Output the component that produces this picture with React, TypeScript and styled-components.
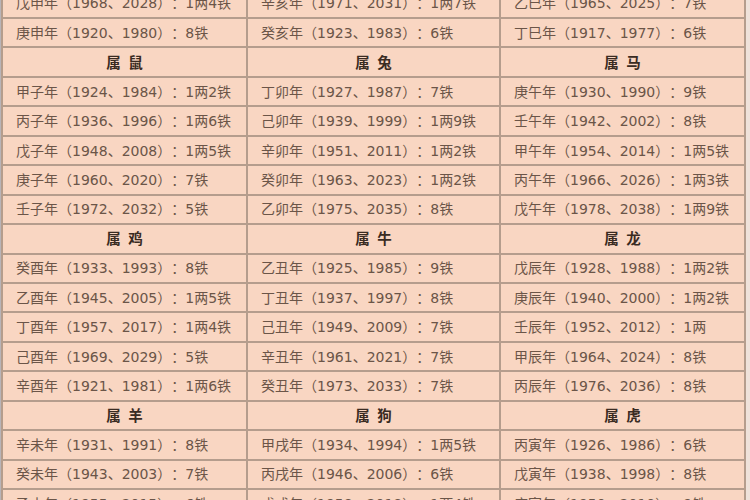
import styled, { createGlobalStyle } from "styled-components";

const GlobalStyle = createGlobalStyle`
  * {
    box-sizing: border-box;
  }
  html, body {
    margin: 0;
    padding: 0;
    background: #efe2da;
  }
  body {
    font-family: "Noto Sans CJK SC", "Noto Sans", sans-serif;
  }
`;

type Cell = { text: string; head?: boolean };

const row = (a: string, b: string, c: string): Cell[] => [
  { text: a },
  { text: b },
  { text: c },
];
const head = (a: string, b: string, c: string): Cell[] => [
  { text: a, head: true },
  { text: b, head: true },
  { text: c, head: true },
];

const rows: Cell[][] = [
  row("戊申年（1968、2028）：1两4铁", "辛亥年（1971、2031）：1两7铁", "乙巳年（1965、2025）：7铁"),
  row("庚申年（1920、1980）：8铁", "癸亥年（1923、1983）：6铁", "丁巳年（1917、1977）：6铁"),
  head("属 鼠", "属 兔", "属 马"),
  row("甲子年（1924、1984）：1两2铁", "丁卯年（1927、1987）：7铁", "庚午年（1930、1990）：9铁"),
  row("丙子年（1936、1996）：1两6铁", "己卯年（1939、1999）：1两9铁", "壬午年（1942、2002）：8铁"),
  row("戊子年（1948、2008）：1两5铁", "辛卯年（1951、2011）：1两2铁", "甲午年（1954、2014）：1两5铁"),
  row("庚子年（1960、2020）：7铁", "癸卯年（1963、2023）：1两2铁", "丙午年（1966、2026）：1两3铁"),
  row("壬子年（1972、2032）：5铁", "乙卯年（1975、2035）：8铁", "戊午年（1978、2038）：1两9铁"),
  head("属 鸡", "属 牛", "属 龙"),
  row("癸酉年（1933、1993）：8铁", "乙丑年（1925、1985）：9铁", "戊辰年（1928、1988）：1两2铁"),
  row("乙酉年（1945、2005）：1两5铁", "丁丑年（1937、1997）：8铁", "庚辰年（1940、2000）：1两2铁"),
  row("丁酉年（1957、2017）：1两4铁", "己丑年（1949、2009）：7铁", "壬辰年（1952、2012）：1两"),
  row("己酉年（1969、2029）：5铁", "辛丑年（1961、2021）：7铁", "甲辰年（1964、2024）：8铁"),
  row("辛酉年（1921、1981）：1两6铁", "癸丑年（1973、2033）：7铁", "丙辰年（1976、2036）：8铁"),
  head("属 羊", "属 狗", "属 虎"),
  row("辛未年（1931、1991）：8铁", "甲戌年（1934、1994）：1两5铁", "丙寅年（1926、1986）：6铁"),
  row("癸未年（1943、2003）：7铁", "丙戌年（1946、2006）：6铁", "戊寅年（1938、1998）：8铁"),
  row("乙未年（1955、2015）：6铁", "戊戌年（1958、2018）：1两4铁", "庚寅年（1950、2010）：9铁"),
];

function App() {
  return (
    <Page>
      <GlobalStyle />
      <Grid>
        {rows.flat().map((c, i) => (
          <TableCell key={i} $head={c.head}>
            {c.text}
          </TableCell>
        ))}
      </Grid>
    </Page>
  );
}

const Page = styled.div`
  width: 750px;
  height: 500px;
  overflow: hidden;
  background: #efe2da;
  border-left: 1px solid #b9b4b8;
`;

const Grid = styled.div`
  display: grid;
  grid-template-columns: 245px 253px 245px;
  grid-auto-rows: 29.44px;
  margin-top: -10.4px;
  width: max-content;
  border-left: 2px solid #b59d8d;
  background: #f9d6c2;
`;

const TableCell = styled.div<{ $head?: boolean }>`
  display: flex;
  align-items: center;
  justify-content: ${(p) => (p.$head ? "center" : "flex-start")};
  padding-left: ${(p) => (p.$head ? "0" : "13px")};
  padding-bottom: 2px;
  border-right: 2px solid #b59d8d;
  border-bottom: 2px solid #b59d8d;
  font-family: ${(p) =>
    p.$head
      ? '"Noto Sans CJK SC", sans-serif'
      : '"DejaVu Sans", "Noto Sans CJK SC", sans-serif'};
  font-size: ${(p) => (p.$head ? "14.5px" : "14px")};
  font-weight: ${(p) => (p.$head ? 700 : 400)};
  word-spacing: ${(p) => (p.$head ? "4px" : "0")};
  text-spacing-trim: space-all;
  color: ${(p) => (p.$head ? "#3a2b22" : "#6b5548")};
  white-space: nowrap;
  overflow: hidden;
`;

export default App;
